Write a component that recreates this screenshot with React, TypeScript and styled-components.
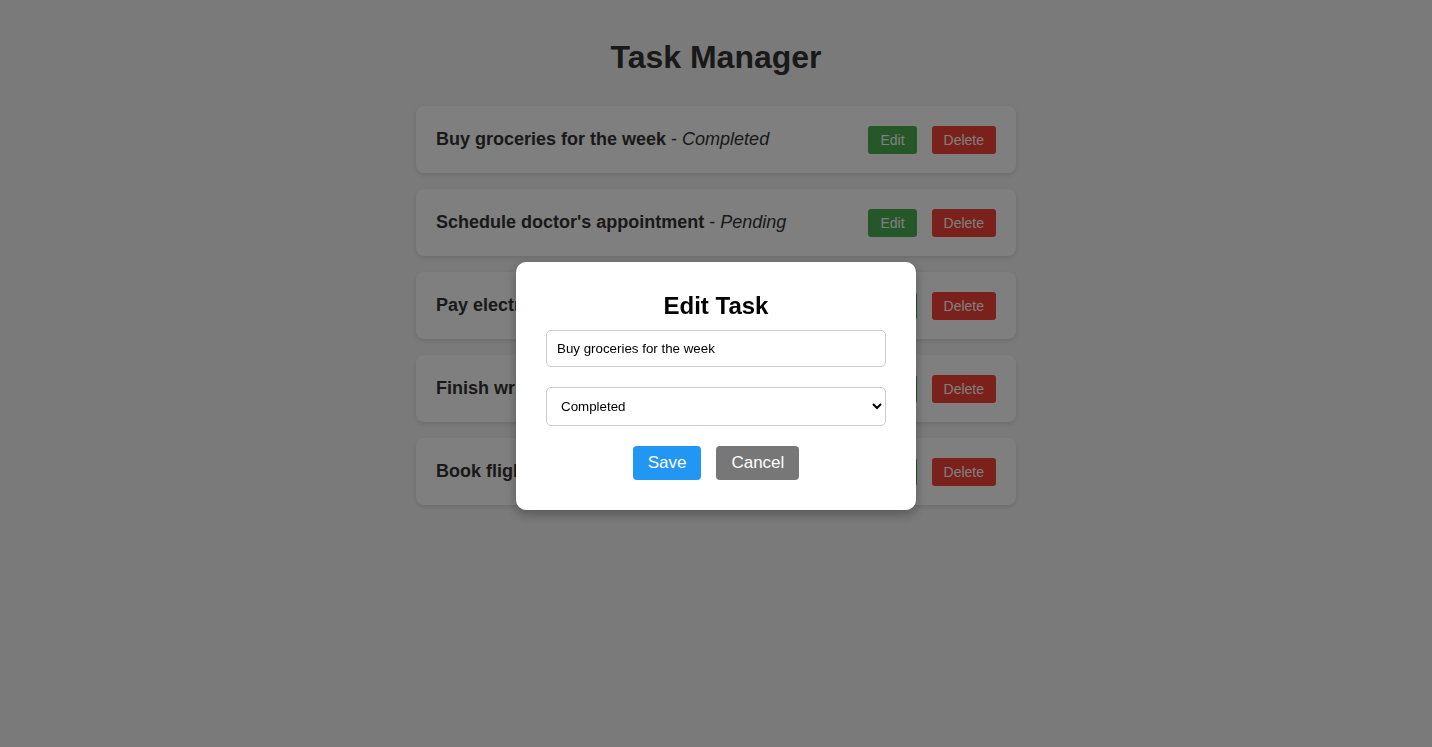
import React, { useState } from "react";
import styled, { createGlobalStyle } from "styled-components";

const GlobalStyle = createGlobalStyle`
  body {
    margin: 0;
    background: #f4f4f4;
    font-family: "Liberation Sans", Arial, sans-serif;
    color: #333;
  }
`;

const Page = styled.div`
  max-width: 600px;
  margin: 0 auto;
  padding: 39px 0 40px;
`;

const Heading = styled.h1`
  margin: 0 0 30px;
  font-size: 32px;
  line-height: 37px;
  text-align: center;
`;

const List = styled.div`
  display: flex;
  flex-direction: column;
  gap: 16px;
`;

const Card = styled.div`
  display: flex;
  align-items: center;
  justify-content: space-between;
  background: #fff;
  border-radius: 8px;
  padding: 20px;
  height: 27px;
  box-shadow: 0 2px 4px rgba(0, 0, 0, 0.1);
`;

const TaskText = styled.div`
  font-size: 18px;
  strong {
    font-weight: bold;
  }
  em {
    font-style: italic;
  }
`;

const Actions = styled.div`
  display: flex;
  gap: 15px;
`;

const SmallButton = styled.button<{ $tone: "edit" | "delete" }>`
  border: none;
  border-radius: 3px;
  height: 28px;
  padding: 0 12px;
  font-family: "Liberation Sans", Arial, sans-serif;
  font-size: 14px;
  color: #fff;
  cursor: pointer;
  background: ${(p) => (p.$tone === "edit" ? "#4caf50" : "#f44336")};
`;

const Overlay = styled.div`
  position: fixed;
  inset: 0;
  background: rgba(0, 0, 0, 0.5);
  display: flex;
  align-items: center;
  justify-content: center;
  padding-top: 25px;
  box-sizing: border-box;
`;

const Modal = styled.div`
  width: 400px;
  box-sizing: border-box;
  background: #fff;
  border-radius: 10px;
  padding: 30px;
  box-shadow: 0 4px 12px rgba(0, 0, 0, 0.3);
  display: flex;
  flex-direction: column;
  gap: 20px;
`;

const ModalTitle = styled.h2`
  margin: 0 0 -10px;
  font-size: 24px;
  line-height: 28px;
  text-align: center;
  color: #000;
`;

const TextInput = styled.input`
  box-sizing: border-box;
  width: 100%;
  height: 37px;
  padding: 0 10px;
  border: 1px solid #ccc;
  border-radius: 5px;
  font-family: "Liberation Sans", Arial, sans-serif;
  font-size: 13.33px;
  color: #000;
`;

const Select = styled.select`
  box-sizing: border-box;
  width: 100%;
  height: 39px;
  padding: 0 10px;
  border: 1px solid #ccc;
  border-radius: 5px;
  background: #fff;
  font-family: "Liberation Sans", Arial, sans-serif;
  font-size: 13.33px;
  color: #000;
`;

const ModalActions = styled.div`
  display: flex;
  justify-content: center;
  gap: 15px;
`;

const ModalButton = styled.button<{ $primary?: boolean }>`
  border: none;
  border-radius: 4px;
  height: 34px;
  padding: 0 15px;
  font-family: "Liberation Sans", Arial, sans-serif;
  font-size: 17px;
  color: #fff;
  cursor: pointer;
  background: ${(p) => (p.$primary ? "#2196f3" : "#777")};
`;

const tasks = [
  { title: "Buy groceries for the week", status: "Completed" },
  { title: "Schedule doctor's appointment", status: "Pending" },
  { title: "Pay electricity bill", status: "Pending" },
  { title: "Finish writing project report", status: "Pending" },
  { title: "Book flight tickets for vacation", status: "Pending" },
];

export default function App() {
  const [title, setTitle] = useState("Buy groceries for the week");
  const [status, setStatus] = useState("Completed");

  return (
    <>
      <GlobalStyle />
      <Page>
        <Heading>Task Manager</Heading>
        <List>
          {tasks.map((t, i) => (
            <Card key={i}>
              <TaskText>
                <strong>{t.title}</strong> - <em>{t.status}</em>
              </TaskText>
              <Actions>
                <SmallButton $tone="edit">Edit</SmallButton>
                <SmallButton $tone="delete">Delete</SmallButton>
              </Actions>
            </Card>
          ))}
        </List>
      </Page>
      <Overlay>
        <Modal>
          <ModalTitle>Edit Task</ModalTitle>
          <TextInput value={title} onChange={(e) => setTitle(e.target.value)} />
          <Select value={status} onChange={(e) => setStatus(e.target.value)}>
            <option>Pending</option>
            <option>Completed</option>
          </Select>
          <ModalActions>
            <ModalButton $primary>Save</ModalButton>
            <ModalButton>Cancel</ModalButton>
          </ModalActions>
        </Modal>
      </Overlay>
    </>
  );
}
